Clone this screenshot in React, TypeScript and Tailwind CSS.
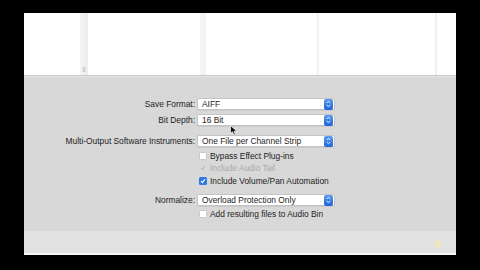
import React from "react";

const font = { fontFamily: '"Liberation Sans", Arial, sans-serif' };

function Stepper() {
  return (
    <span className="flex h-[11px] w-[9px] flex-col items-center justify-center rounded-[2px] bg-gradient-to-b from-[#5a9cf2] to-[#1f63d8]">
      <svg width="5" height="8" viewBox="0 0 5 8">
        <path d="M0.8 3 L2.5 1.3 L4.2 3" fill="none" stroke="#fff" strokeWidth="0.9" />
        <path d="M0.8 5 L2.5 6.7 L4.2 5" fill="none" stroke="#fff" strokeWidth="0.9" />
      </svg>
    </span>
  );
}

function Popup({ value }: { value: string }) {
  return (
    <div className="flex h-[12px] w-[138px] items-center justify-between rounded-[2px] border border-[#c4c4c4] bg-white pl-[4px] pr-[1px] shadow-[0_1px_0_rgba(0,0,0,0.06)]">
      <span className="text-[8.4px] leading-none text-[#1e1e1e]">{value}</span>
      <Stepper />
    </div>
  );
}

function Check({ label, checked, disabled }: { label: string; checked?: boolean; disabled?: boolean }) {
  return (
    <div className="flex h-[12px] items-center gap-[3px]">
      {checked ? (
        <span className="flex h-[8px] w-[8px] items-center justify-center rounded-[1.5px] bg-[#2f79e4]">
          <svg width="6" height="6" viewBox="0 0 6 6">
            <path d="M1 3.2 L2.4 4.6 L5 1.2" fill="none" stroke="#fff" strokeWidth="1.1" />
          </svg>
        </span>
      ) : disabled ? (
        <span className="flex h-[8px] w-[8px] items-center justify-center">
          <svg width="6" height="6" viewBox="0 0 6 6">
            <path d="M1 3.2 L2.4 4.6 L5 1.2" fill="none" stroke="#a9a9a9" strokeWidth="1" />
          </svg>
        </span>
      ) : (
        <span className="h-[8px] w-[8px] rounded-[1.5px] border border-[#c9c9c9] bg-white" />
      )}
      <span className={`text-[8.4px] leading-none ${disabled ? "text-[#aaaaaa]" : "text-[#1e1e1e]"}`}>{label}</span>
    </div>
  );
}

function Label({ text }: { text: string }) {
  return <span className="w-[173px] pr-[2px] text-right text-[8.4px] leading-none text-[#1e1e1e]">{text}</span>;
}

export default function App() {
  return (
    <div className="relative h-[270px] w-[480px] bg-black pt-[13px]" style={font}>
      <div className="mx-[24px] flex h-[242px] flex-col bg-[#d8d8d8]">
        <div className="relative flex h-[63px] border-b border-[#c8c8c8] bg-white">
          <div className="w-[56px]" />
          <div className="flex w-[8px] items-end justify-center bg-gradient-to-r from-[#f4f4f4] to-[#ececec] pb-[3px]">
            <span className="text-[6px] leading-none text-[#9a9a9a]">||</span>
          </div>
          <div className="w-[112px]" />
          <div className="w-[6px] bg-[#f4f4f4]" />
          <div className="w-[111px]" />
          <div className="w-[2px] bg-[#f3f3f3]" />
          <div className="w-[116px]" />
          <div className="w-[2px] bg-[#f1f1f1]" />
          <div className="flex-1" />
        </div>
        <div className="h-[1px] bg-[#e6e6e6]" />

        <div className="flex flex-1 flex-col pt-[21px]">
          <div className="flex items-center">
            <Label text="Save Format:" />
            <Popup value="AIFF" />
          </div>
          <div className="mt-[4px] flex items-center">
            <Label text="Bit Depth:" />
            <Popup value="16 Bit" />
          </div>
          <div className="mt-[9px] flex items-center">
            <Label text="Multi-Output Software Instruments:" />
            <Popup value="One File per Channel Strip" />
          </div>
          <div className="mt-[3px] flex flex-col pl-[175px]">
            <Check label="Bypass Effect Plug-ins" />
            <Check label="Include Audio Tail" disabled />
            <div className="mt-[1px]">
              <Check label="Include Volume/Pan Automation" checked />
            </div>
          </div>
          <div className="mt-[7px] flex items-center">
            <Label text="Normalize:" />
            <Popup value="Overload Protection Only" />
          </div>
          <div className="mt-[2px] pl-[175px]">
            <Check label="Add resulting files to Audio Bin" />
          </div>
        </div>

        <div className="h-[22px] bg-[#e2e2e2]" />
        <div className="h-[2px] bg-[#f7f7f7]" />
      </div>

      <svg className="absolute left-[230px] top-[125px]" width="8" height="11" viewBox="0 0 8 11">
        <path d="M0.5 0.5 L0.5 8.5 L2.5 6.8 L4 10 L5.4 9.4 L4 6.3 L6.8 6.3 Z" fill="#111" stroke="#fff" strokeWidth="0.7" />
      </svg>
      <span className="absolute left-[435px] top-[240px] h-[8px] w-[6px] rounded-full bg-[#f3e9a8] opacity-70" />
    </div>
  );
}
